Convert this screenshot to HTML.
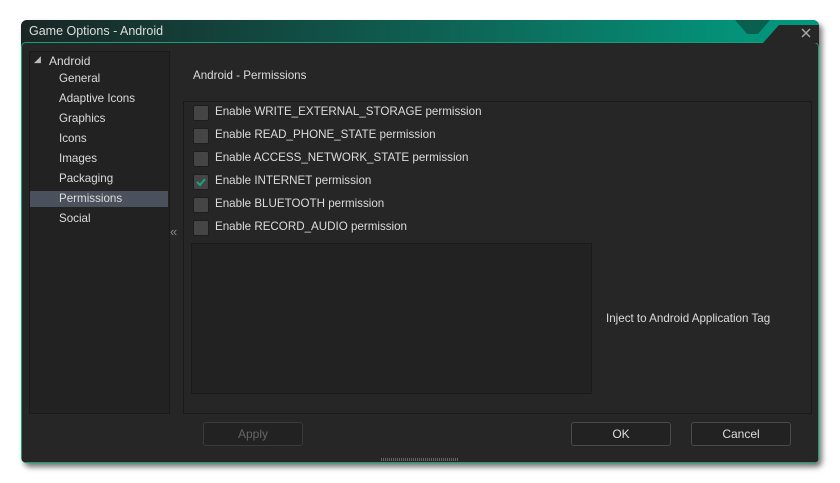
<!DOCTYPE html>
<html><head><style>
body{margin:0;width:840px;height:483px;background:#fff;font-family:"Liberation Sans",sans-serif;position:relative;overflow:hidden}
.win{position:absolute;left:21px;top:20px;width:798px;height:443px;border-radius:6px;background:#262626;box-shadow:3px 4px 6px rgba(0,0,0,.55);overflow:hidden}
.tb{position:absolute;left:0;top:0;width:798px;height:23px;background:linear-gradient(90deg,#1a2624 0%,#12473f 30%,#0d6b5b 60%,#03937a 90%,#00987c 100%)}
.tb span{position:absolute;left:8px;top:4px;color:#ddd;font-size:12.5px}
.body{position:absolute;left:0;top:22px;width:796px;height:419px;border:1px solid #13a277;border-radius:5px 5px 3px 3px;background:#262626}
.t{position:absolute;color:#dcdcdc;font-size:11.6px;white-space:nowrap}
.cb{position:absolute;left:193px;width:14px;height:14px;border:1px solid #1e1e1e;border-radius:2px;background:#454545}
.btn{position:absolute;top:422px;width:98px;height:22px;border:1px solid #4a4a4a;border-radius:3px;background:#222;color:#ddd;font-size:12px;text-align:center;line-height:22px}
</style></head><body>
<div class="win">
<div class="tb"><span>Game Options - Android</span></div>
<div class="body"></div>
<svg style="position:absolute;left:700px;top:0" width="98" height="24"><polygon points="14,0 49,0 37,14 26,14" fill="#0b5f4e"/><polygon points="42,23 58,5 98,5 98,23" fill="#262626"/><path d="M81,9 L89,17 M89,9 L81,17" stroke="#aaa" stroke-width="1.4"/></svg>
</div>
<div style="position:absolute;left:29px;top:51px;width:139px;height:361px;border:1px solid #1a1a1a;background:#222"></div>
<div style="position:absolute;left:30px;top:191px;width:138px;height:16px;background:#4b515c"></div>
<div class="t" style="left:34px;top:54px;font-size:9px;color:#bbb">◢</div>
<div class="t" style="left:49px;top:54px;font-size:12px">Android</div>
<div class="t" style="left:59px;top:72px">General</div>
<div class="t" style="left:59px;top:92px">Adaptive Icons</div>
<div class="t" style="left:59px;top:112px">Graphics</div>
<div class="t" style="left:59px;top:132px">Icons</div>
<div class="t" style="left:59px;top:152px">Images</div>
<div class="t" style="left:59px;top:172px">Packaging</div>
<div class="t" style="left:59px;top:192px">Permissions</div>
<div class="t" style="left:59px;top:212px">Social</div>
<div class="t" style="left:170px;top:224px;color:#888;font-size:13px">«</div>
<div class="t" style="left:193px;top:69px">Android - Permissions</div>
<div style="position:absolute;left:183px;top:101px;width:627px;height:311px;border:1px solid #1a1a1a;background:#262626"></div>
<div class="cb" style="top:105px"></div><div class="t" style="left:215px;top:105px">Enable WRITE_EXTERNAL_STORAGE permission</div>
<div class="cb" style="top:128px"></div><div class="t" style="left:215px;top:128px">Enable READ_PHONE_STATE permission</div>
<div class="cb" style="top:151px"></div><div class="t" style="left:215px;top:151px">Enable ACCESS_NETWORK_STATE permission</div>
<div class="cb" style="top:174px"></div><div class="t" style="left:215px;top:174px">Enable INTERNET permission</div>
<svg style="position:absolute;left:193px;top:174px" width="16" height="16"><path d="M4,8 L7,11 L12,5" stroke="#17a57d" stroke-width="2" fill="none"/></svg>
<div class="cb" style="top:197px"></div><div class="t" style="left:215px;top:197px">Enable BLUETOOTH permission</div>
<div class="cb" style="top:220px"></div><div class="t" style="left:215px;top:220px">Enable RECORD_AUDIO permission</div>
<div style="position:absolute;left:191px;top:243px;width:399px;height:149px;border:1px solid #1a1a1a;background:#222"></div>
<div class="t" style="left:606px;top:312px">Inject to Android Application Tag</div>
<div class="btn" style="left:203px;color:#666;border-color:#3a3a3a">Apply</div>
<div class="btn" style="left:571px">OK</div>
<div class="btn" style="left:691px">Cancel</div>
<div style="position:absolute;left:381px;top:458px;width:78px;height:3px;background:repeating-linear-gradient(90deg,#666 0 1px,transparent 1px 2px)"></div>
</body></html>
